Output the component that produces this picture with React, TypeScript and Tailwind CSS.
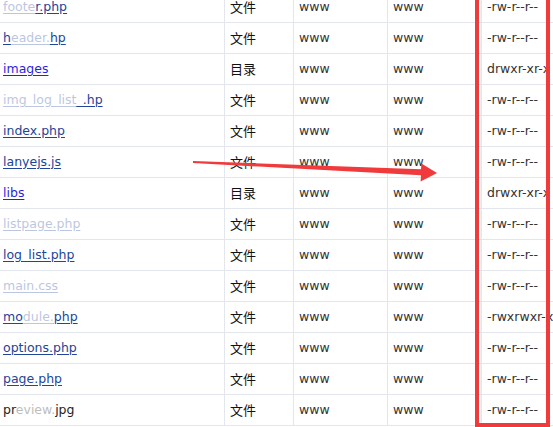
type Part = { t: string; faded?: boolean };

type Row = {
  name: Part[];
  kind: "file" | "dir" | "plain";
  type: string;
  perm: string;
};

const rows: Row[] = [
  { name: [{ t: "foote", faded: true }, { t: "r.php" }], kind: "file", type: "文件", perm: "-rw-r--r--" },
  { name: [{ t: "h" }, { t: "eader.", faded: true }, { t: "hp" }], kind: "file", type: "文件", perm: "-rw-r--r--" },
  { name: [{ t: "images" }], kind: "dir", type: "目录", perm: "drwxr-xr-x" },
  { name: [{ t: "img_log_list", faded: true }, { t: "_.hp" }], kind: "file", type: "文件", perm: "-rw-r--r--" },
  { name: [{ t: "index.php" }], kind: "file", type: "文件", perm: "-rw-r--r--" },
  { name: [{ t: "lanyejs.js" }], kind: "file", type: "文件", perm: "-rw-r--r--" },
  { name: [{ t: "libs" }], kind: "dir", type: "目录", perm: "drwxr-xr-x" },
  { name: [{ t: "listpage.php", faded: true }], kind: "file", type: "文件", perm: "-rw-r--r--" },
  { name: [{ t: "log_list.php" }], kind: "file", type: "文件", perm: "-rw-r--r--" },
  { name: [{ t: "main.css", faded: true }], kind: "file", type: "文件", perm: "-rw-r--r--" },
  { name: [{ t: "mo" }, { t: "dule.", faded: true }, { t: "php" }], kind: "file", type: "文件", perm: "-rwxrwxr-x" },
  { name: [{ t: "options.php" }], kind: "file", type: "文件", perm: "-rw-r--r--" },
  { name: [{ t: "page.php" }], kind: "file", type: "文件", perm: "-rw-r--r--" },
  { name: [{ t: "pr" }, { t: "eview.", faded: true }, { t: "jpg" }], kind: "plain", type: "文件", perm: "-rw-r--r--" },
];

function FileName({ row }: { row: Row }) {
  const parts = row.name.map((p, i) => (
    <span key={i} className={p.faded ? "opacity-30" : ""}>
      {p.t}
    </span>
  ));
  if (row.kind === "plain") {
    return <span className="text-[#222]">{parts}</span>;
  }
  return (
    <a
      href="#"
      className={`underline underline-offset-2 ${
        row.kind === "dir" ? "text-[#2a1fe0]" : "text-[#22449a]"
      }`}
    >
      {parts}
    </a>
  );
}

export default function App() {
  return (
    <div className="relative w-[553px] h-[427px] overflow-hidden bg-white font-['DejaVu_Sans','Noto_Sans_CJK_SC',sans-serif] text-[12.5px]">
      {/* file table */}
      <div className="-mt-[8px]">
        {rows.map((row, i) => (
          <div key={i} className="flex h-[31px] border-b border-[#e3e6ec]">
            <div className="w-[225px] shrink-0 flex items-center pl-[3px] border-r border-[#e3e6ec]">
              <FileName row={row} />
            </div>
            <div className="w-[69px] shrink-0 flex items-center pl-[5px] border-r border-[#e3e6ec] text-[13px] text-[#111] font-['Noto_Sans_CJK_SC',sans-serif]">
              {row.type}
            </div>
            <div className="w-[94px] shrink-0 flex items-center pl-[5px] border-r border-[#e3e6ec] text-[#333]">
              www
            </div>
            <div className="w-[94px] shrink-0 flex items-center pl-[5px] border-r border-[#e3e6ec] text-[#333]">
              www
            </div>
            <div className="flex-1 flex items-center pl-[5px] text-[#333] whitespace-nowrap">
              {row.perm}
            </div>
          </div>
        ))}
      </div>

      {/* annotation: red box around permissions */}
      <div className="absolute left-[475px] top-[-10px] w-[75px] h-[437px] border-4 border-[#f03a3c]" />

      {/* annotation: arrow */}
      <svg className="absolute left-0 top-0" width="553" height="427" viewBox="0 0 553 427">
        <polygon
          points="193,161 421,169.3 421.4,163.5 437,173 420.6,181.5 421,175.3 193,163"
          fill="#f03a3c"
        />
      </svg>
    </div>
  );
}
